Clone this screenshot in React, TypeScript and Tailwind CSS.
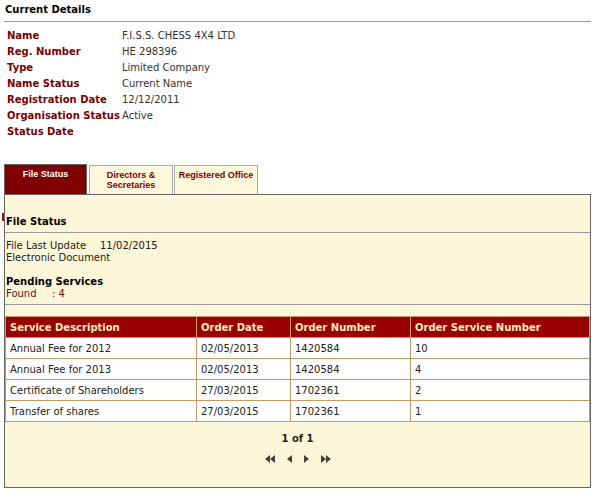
import React from "react";

type Detail = { label: string; value: string };

const details: Detail[] = [
  { label: "Name", value: "F.I.S.S. CHESS 4X4 LTD" },
  { label: "Reg. Number", value: "HE 298396" },
  { label: "Type", value: "Limited Company" },
  { label: "Name Status", value: "Current Name" },
  { label: "Registration Date", value: "12/12/2011" },
  { label: "Organisation Status", value: "Active" },
  { label: "Status Date", value: "" },
];

type Service = { description: string; date: string; order: string; serviceNo: string };

const services: Service[] = [
  { description: "Annual Fee for 2012", date: "02/05/2013", order: "1420584", serviceNo: "10" },
  { description: "Annual Fee for 2013", date: "02/05/2013", order: "1420584", serviceNo: "4" },
  { description: "Certificate of Shareholders", date: "27/03/2015", order: "1702361", serviceNo: "2" },
  { description: "Transfer of shares", date: "27/03/2015", order: "1702361", serviceNo: "1" },
];

// pager arrows: single or double solid triangles
function Arrow({ dir, double }: { dir: "left" | "right"; double?: boolean }) {
  const w = double ? 10 : 5;
  const tri = (x: number) =>
    dir === "left" ? `${x + 5},0 ${x},4 ${x + 5},8` : `${x},0 ${x + 5},4 ${x},8`;
  return (
    <svg width={w} height={8} viewBox={`0 0 ${w} 8`} className="block">
      <polygon points={tri(0)} fill="#4a3d36" />
      {double && <polygon points={tri(5)} fill="#4a3d36" />}
    </svg>
  );
}

export default function App() {
  return (
    <div className="min-h-[497px] w-[596px] bg-white pl-[4px] font-['DejaVu_Sans',Verdana,sans-serif] text-[10px] text-[#222]">
      <div className="w-[587px]">
        {/* Current details */}
        <div className="border-b border-[#9a9a9a] pt-[2px] pb-[3px] pl-[1px] font-bold leading-[16px] text-black">
          Current Details
        </div>
        <div className="mt-[6px] pl-[3px]">
          {details.map((d) => (
            <div key={d.label} className="flex leading-[16px]">
              <div className="w-[115px] shrink-0 font-bold text-[#7d0000]">{d.label}</div>
              <div className="text-[#333]">{d.value}</div>
            </div>
          ))}
        </div>

        {/* Tabs */}
        <div className="mt-[24px] flex items-end">
          <div className="h-[30px] w-[83px] border border-b-0 border-[#666] bg-[#800000] pt-[4px] text-center font-['Liberation_Sans',Arial,sans-serif] text-[9px] font-bold leading-[10px] text-white">
            File Status
          </div>
          <div className="ml-[2px] h-[29px] w-[84px] border border-b-0 border-[#aaa] bg-[#fdf8dc] pt-[4px] text-center font-['Liberation_Sans',Arial,sans-serif] text-[9px] font-bold leading-[10px] text-[#7d0000]">
            Directors &amp;
            <br />
            Secretaries
          </div>
          <div className="ml-[1px] h-[29px] w-[84px] border border-b-0 border-[#aaa] bg-[#fdf8dc] pt-[4px] text-center font-['Liberation_Sans',Arial,sans-serif] text-[9px] font-bold leading-[10px] text-[#7d0000]">
            Registered Office
          </div>
        </div>

        {/* Tab panel */}
        <div className="relative border border-[#666] bg-[#fcf7d8]">
          <div className="absolute left-[-3px] top-[18px] h-[8px] w-[2px] bg-[#a01010]" />

          <div className="border-b border-[#9a9a9a] pt-[21px] pb-[4px] pl-[1px] font-bold leading-[12px] text-black">
            File Status
          </div>

          <div className="border-b border-[#9a9a9a] pt-[7px] pb-[4px] pl-[1px] leading-[12px]">
            <div className="flex">
              <span className="w-[94px]">File Last Update</span>
              <span>11/02/2015</span>
            </div>
            <div>Electronic Document</div>
            <div className="mt-[12px] font-bold text-black">Pending Services</div>
            <div className="flex text-[#6e0c24]">
              <span className="w-[46px]">Found</span>
              <span>: 4</span>
            </div>
          </div>

          <table className="mt-[11px] w-full table-fixed border-collapse bg-white">
            <colgroup>
              <col className="w-[191px]" />
              <col className="w-[94px]" />
              <col className="w-[120px]" />
              <col />
            </colgroup>
            <thead>
              <tr className="h-[21px] bg-[#990000] text-left font-bold text-[#ffecb8]">
                <th className="border border-[#c99a66] px-[4px] py-0">Service Description</th>
                <th className="border border-[#c99a66] px-[4px] py-0">Order Date</th>
                <th className="border border-[#c99a66] px-[4px] py-0">Order Number</th>
                <th className="border border-[#c99a66] px-[4px] py-0">Order Service Number</th>
              </tr>
            </thead>
            <tbody>
              {services.map((s, i) => (
                <tr key={i} className="h-[21px]">
                  <td className="border border-[#c99a66] px-[4px] py-0">{s.description}</td>
                  <td className="border border-[#c99a66] px-[4px] py-0">{s.date}</td>
                  <td className="border border-[#c99a66] px-[4px] py-0">{s.order}</td>
                  <td className="border border-[#c99a66] px-[4px] py-0">{s.serviceNo}</td>
                </tr>
              ))}
            </tbody>
          </table>

          {/* Pager */}
          <div className="mt-[11px] text-center font-bold leading-[12px] text-[#2a2220]">1 of 1</div>
          <div className="mt-[10px] mb-[24px] flex items-center justify-center gap-[12px]">
            <Arrow dir="left" double />
            <Arrow dir="left" />
            <Arrow dir="right" />
            <Arrow dir="right" double />
          </div>
        </div>
      </div>
    </div>
  );
}
